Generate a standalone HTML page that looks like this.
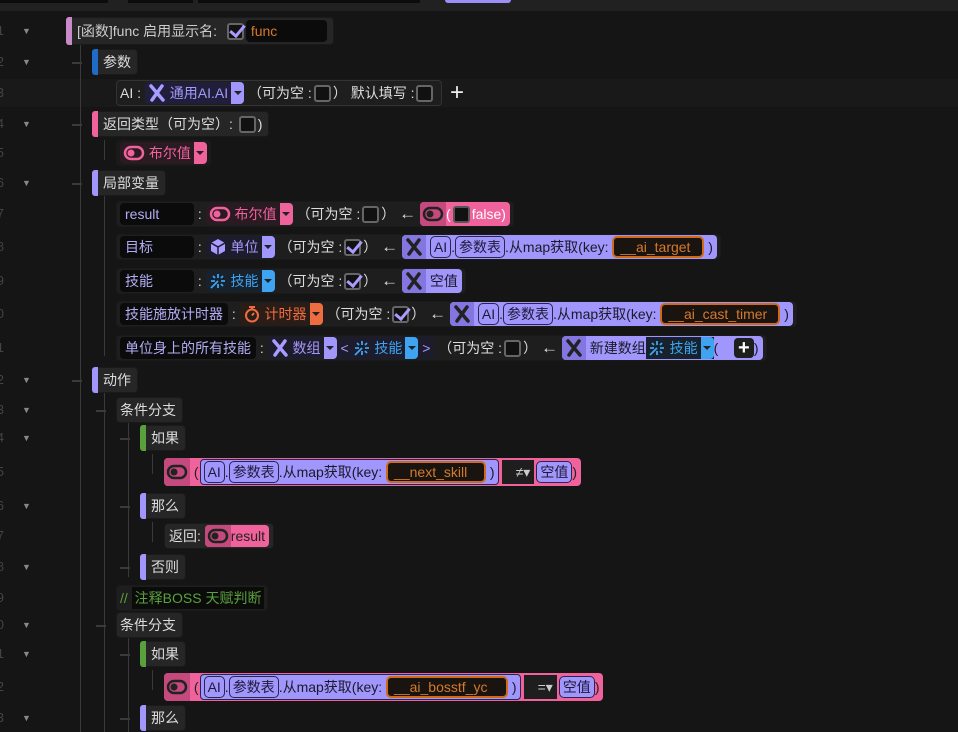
<!DOCTYPE html>
<html><head><meta charset="utf-8">
<style>
*{box-sizing:border-box;margin:0;padding:0}
body{width:958px;height:732px;background:#151515;overflow:hidden;position:relative;font-family:"Liberation Sans","Noto Sans CJK SC",sans-serif;font-size:14px;color:#ddd}
.a{position:absolute}
.row{position:absolute;display:flex;align-items:center;height:26px;white-space:nowrap}
.blk{background:#262626;border-radius:4px;height:26px;display:flex;align-items:center;padding:0 6px 0 4px;position:relative;border:1px solid #1a1a1a}
.bar{width:6px;height:26px;border-radius:3px 0 0 3px;margin:0 5px 0 -5px}
.ln{position:absolute;background:#3a3a3a}
.num{position:absolute;left:-6px;width:10px;text-align:right;color:#444;font-size:13px}
.arr{position:absolute;left:22px;color:#888;font-size:9px}
.inp{background:#0b0b0b;border-radius:4px;height:22px;display:flex;align-items:center;padding:0 5px;color:#b2acf5}
.chk{width:17px;height:17px;border:2px solid #666;background:#111;border-radius:3px;display:inline-block;margin:0 2px;position:relative}
.chk.on::after{content:"";position:absolute;left:4px;top:-3px;width:6px;height:12px;border:solid #a99cff;border-width:0 3px 3px 0;transform:rotate(40deg)}
.type{display:flex;align-items:center;height:22px;border-radius:4px;background:#1b1b1b;padding-left:3px}
.dd{width:13px;height:22px;border-radius:0 4px 4px 0;margin-left:3px;display:flex;align-items:center;justify-content:center}
.dd::after{content:"";border:4px solid transparent;border-top:4px solid #222;margin-top:4px}
.pp{background:#a096fb;color:#1a1a2a}
.pk{background:#f0629b;color:#fff}
.ibox{border:1.5px solid #2a2450;border-radius:5px;padding:0 3px;height:22px;display:flex;align-items:center;color:#1d1a3a;background:#a096fb}
.key{border:2px solid #d06a18;background:#1a1410;color:#d57a2c;border-radius:5px;height:22px;display:flex;align-items:center;padding:0 6px}
.g{color:#ccc}
.la{font-size:17px}
</style></head><body>
<div class="a" style="left:0;top:0;width:958px;height:11px;background:#212121"></div>
<div class="a" style="left:0;top:0;width:108px;height:3px;background:#0c0c0c"></div>
<div class="a" style="left:128px;top:0;width:65px;height:3px;background:#0c0c0c"></div>
<div class="a" style="left:198px;top:0;width:155px;height:3px;background:#0c0c0c"></div>
<div class="a" style="left:285px;top:0;width:135px;height:3px;background:#0c0c0c"></div>
<div class="a" style="left:445px;top:0;width:66px;height:3px;background:#9c90f8;border-radius:0 0 4px 4px"></div>
<div class="a" style="left:0;top:79px;width:958px;height:28px;background:#191919"></div>

<div class="num" style="top:23px">1</div><div class="arr" style="top:26px">▼</div>
<div class="num" style="top:54px">2</div><div class="arr" style="top:57px">▼</div>
<div class="num" style="top:85px">3</div>
<div class="num" style="top:116px">4</div><div class="arr" style="top:119px">▼</div>
<div class="num" style="top:145px">5</div>
<div class="num" style="top:175px">6</div><div class="arr" style="top:178px">▼</div>
<div class="num" style="top:206px">7</div>
<div class="num" style="top:239px">8</div>
<div class="num" style="top:273px">9</div>
<div class="num" style="top:306px">0</div>
<div class="num" style="top:340px">1</div>
<div class="num" style="top:372px">2</div><div class="arr" style="top:375px">▼</div>
<div class="num" style="top:402px">3</div><div class="arr" style="top:405px">▼</div>
<div class="num" style="top:430px">4</div><div class="arr" style="top:433px">▼</div>
<div class="num" style="top:464px">5</div>
<div class="num" style="top:498px">6</div><div class="arr" style="top:501px">▼</div>
<div class="num" style="top:528px">7</div>
<div class="num" style="top:559px">8</div><div class="arr" style="top:562px">▼</div>
<div class="num" style="top:590px">9</div>
<div class="num" style="top:617px">0</div><div class="arr" style="top:620px">▼</div>
<div class="num" style="top:646px">1</div><div class="arr" style="top:649px">▼</div>
<div class="num" style="top:679px">2</div>
<div class="num" style="top:710px">3</div><div class="arr" style="top:713px">▼</div>

<div class="ln" style="left:80px;top:44px;width:1px;height:688px"></div>
<div class="ln" style="left:104px;top:196px;width:1px;height:160px"></div>
<div class="ln" style="left:104px;top:392px;width:1px;height:340px"></div>
<div class="ln" style="left:128px;top:422px;width:1px;height:155px"></div>
<div class="ln" style="left:128px;top:637px;width:1px;height:95px"></div>
<div class="ln" style="left:72px;top:62px;width:10px;height:2px"></div>
<div class="ln" style="left:72px;top:124px;width:10px;height:2px"></div>
<div class="ln" style="left:72px;top:183px;width:10px;height:2px"></div>
<div class="ln" style="left:72px;top:380px;width:10px;height:2px"></div>
<div class="ln" style="left:96px;top:410px;width:10px;height:2px"></div>
<div class="ln" style="left:96px;top:625px;width:10px;height:2px"></div>
<div class="ln" style="left:120px;top:438px;width:10px;height:2px"></div>
<div class="ln" style="left:120px;top:506px;width:10px;height:2px"></div>
<div class="ln" style="left:120px;top:567px;width:10px;height:2px"></div>
<div class="ln" style="left:120px;top:654px;width:10px;height:2px"></div>
<div class="ln" style="left:120px;top:718px;width:10px;height:2px"></div>
<div class="ln" style="left:104px;top:140px;width:1px;height:20px"></div>
<div class="ln" style="left:152px;top:454px;width:1px;height:20px"></div>
<div class="ln" style="left:152px;top:522px;width:1px;height:20px"></div>
<div class="ln" style="left:152px;top:670px;width:1px;height:20px"></div>

<div class="row" style="left:66px;top:18px"><div class="blk" style="height:28px;padding-right:6px"><div class="bar" style="background:#c98ac9;height:28px"></div><span class="g">[函数]func 启用显示名:&nbsp;&nbsp;</span><span class="chk on"></span><span class="inp" style="width:81px;color:#d9772c">func</span></div></div>
<div class="row" style="left:92px;top:49px"><div class="blk"><div class="bar" style="background:#1f6cc6"></div>参数</div></div>
<div class="row" style="left:116px;top:80px"><div class="blk" style="background:#1e1e1e;border-color:#333;padding-left:3px">AI :&nbsp;<span class="type" style="background:#201e3a;color:#a39af8"><svg width="18" height="18" viewBox="0 0 18 18"><path d="M3 2 L15 16 M14 2 L4 16" stroke="#a79cff" stroke-width="3.5" stroke-linecap="round"/></svg>&nbsp;通用AI.AI<span class="dd" style="background:#a096fb"></span></span>&nbsp;（可为空 :<span class="chk"></span>）&nbsp;默认填写 :<span class="chk"></span></div></div>
<div class="a" style="left:450px;top:80px;font-size:24px;color:#eee;line-height:26px">+</div>
<div class="row" style="left:92px;top:111px"><div class="blk"><div class="bar" style="background:#f0629b"></div>返回类型（可为空）:&nbsp;<span class="chk"></span>)</div></div>
<div class="row" style="left:116px;top:140px"><div class="blk" style="background:#1a1a1a;padding:0 3px"><span class="type" style="background:#2a1a22;color:#f0629b"><svg width="22" height="16" viewBox="0 0 22 16"><rect x="2" y="2" width="18" height="12" rx="6" fill="none" stroke="#f0629b" stroke-width="2.5"/><circle cx="8" cy="8" r="3.5" fill="#f0629b"/></svg>&nbsp;布尔值<span class="dd" style="background:#f0629b"></span></span></div></div>
<div class="row" style="left:92px;top:170px"><div class="blk"><div class="bar" style="background:#a096fb"></div>局部变量</div></div>

<div class="row" style="left:116px;top:201px"><div class="blk" style="background:#1e1e1e;padding:0 3px"><span class="inp" style="width:74px">result</span>&nbsp;:&nbsp;<span class="type" style="background:#2a1a22;color:#f0629b"><svg width="22" height="16" viewBox="0 0 22 16"><rect x="2" y="2" width="18" height="12" rx="6" fill="none" stroke="#f0629b" stroke-width="2.5"/><circle cx="8" cy="8" r="3.5" fill="#f0629b"/></svg>&nbsp;布尔值<span class="dd" style="background:#f0629b"></span></span>&nbsp;（可为空 :<span class="chk"></span>）&nbsp;<span class="la">←</span>&nbsp;<span class="type pk" style="height:24px;padding:0 4px 0 0"><span style="background:#c44a7d;height:24px;display:flex;align-items:center;padding:0 2px;border-radius:4px 0 0 4px"><svg width="22" height="16" viewBox="0 0 22 16"><rect x="2" y="2" width="18" height="12" rx="6" fill="none" stroke="#222" stroke-width="2.5"/><circle cx="8" cy="8" r="3.5" fill="#222"/></svg></span>(<span class="chk" style="background:#111;border-color:#555"></span>false)</span></div></div>
<div class="row" style="left:116px;top:234px"><div class="blk" style="background:#1e1e1e;padding:0 3px"><span class="inp" style="width:74px">目标</span>&nbsp;:&nbsp;<span class="type" style="background:#1d1c2c;color:#a39af8"><svg width="18" height="18" viewBox="0 0 18 18"><path d="M9 1 L16 5 L16 13 L9 17 L2 13 L2 5Z" fill="#a79cff"/><path d="M2 5 L9 9 L16 5 M9 9 V17" stroke="#1d1c2c" stroke-width="1.5" fill="none"/></svg>&nbsp;单位<span class="dd" style="background:#a096fb"></span></span>&nbsp;（可为空 :<span class="chk on"></span>）&nbsp;<span class="la">←</span>&nbsp;<span class="type pp" style="height:24px;padding:0 4px 0 0"><span style="background:#8376e0;height:24px;display:flex;align-items:center;padding:0 3px;border-radius:4px 0 0 4px"><svg width="18" height="18" viewBox="0 0 18 18"><path d="M3 2 L15 16 M14 2 L4 16" stroke="#222" stroke-width="3.5" stroke-linecap="round"/></svg></span>&nbsp;<span class="ibox">AI</span>.<span class="ibox">参数表</span>.从map获取(key:&nbsp;<span class="key" style="width:92px">__ai_target</span>&nbsp;)</span></div></div>
<div class="row" style="left:116px;top:268px"><div class="blk" style="background:#1e1e1e;padding:0 3px"><span class="inp" style="width:74px">技能</span>&nbsp;:&nbsp;<span class="type" style="background:#17222c;color:#3ea4f2"><svg width="18" height="18" viewBox="0 0 18 18"><path d="M2 16 L9 9 M9 2 V6 M9 12 V16 M2 9 H6 M12 9 H16 M4 4 L6 6 M12 12 L14 14 M14 4 L12 6" stroke="#3ea4f2" stroke-width="1.8"/></svg>&nbsp;技能<span class="dd" style="background:#3ea4f2"></span></span>&nbsp;（可为空 :<span class="chk on"></span>）&nbsp;<span class="la">←</span>&nbsp;<span class="type pp" style="height:24px;padding:0 4px 0 0"><span style="background:#8376e0;height:24px;display:flex;align-items:center;padding:0 3px;border-radius:4px 0 0 4px"><svg width="18" height="18" viewBox="0 0 18 18"><path d="M3 2 L15 16 M14 2 L4 16" stroke="#222" stroke-width="3.5" stroke-linecap="round"/></svg></span>&nbsp;空值</span></div></div>
<div class="row" style="left:116px;top:301px"><div class="blk" style="background:#1e1e1e;padding:0 3px"><span class="inp">技能施放计时器</span>&nbsp;:&nbsp;<span class="type" style="background:#2a1c16;color:#ee6d40"><svg width="18" height="18" viewBox="0 0 18 18"><circle cx="9" cy="10.5" r="6" fill="none" stroke="#ee6d40" stroke-width="2"/><path d="M6 2 H12 M9 2 V4.5 M9 10.5 L11 8" stroke="#ee6d40" stroke-width="2"/></svg>&nbsp;计时器<span class="dd" style="background:#ee6d40"></span></span>&nbsp;（可为空 :<span class="chk on"></span>）&nbsp;<span class="la">←</span>&nbsp;<span class="type pp" style="height:24px;padding:0 4px 0 0"><span style="background:#8376e0;height:24px;display:flex;align-items:center;padding:0 3px;border-radius:4px 0 0 4px"><svg width="18" height="18" viewBox="0 0 18 18"><path d="M3 2 L15 16 M14 2 L4 16" stroke="#222" stroke-width="3.5" stroke-linecap="round"/></svg></span>&nbsp;<span class="ibox">AI</span>.<span class="ibox">参数表</span>.从map获取(key:&nbsp;<span class="key" style="width:120px">__ai_cast_timer</span>&nbsp;)</span></div></div>
<div class="row" style="left:116px;top:335px"><div class="blk" style="background:#1e1e1e;padding:0 3px"><span class="inp">单位身上的所有技能</span>&nbsp;:&nbsp;<span class="type" style="background:#1d1c2c;color:#a39af8"><svg width="18" height="18" viewBox="0 0 18 18"><path d="M3 2 L15 16 M14 2 L4 16" stroke="#a79cff" stroke-width="3.5" stroke-linecap="round"/></svg>&nbsp;数组<span class="dd" style="background:#a096fb"></span>&nbsp;&lt;&nbsp;<svg width="18" height="18" viewBox="0 0 18 18"><path d="M2 16 L9 9 M9 2 V6 M9 12 V16 M2 9 H6 M12 9 H16 M4 4 L6 6 M12 12 L14 14 M14 4 L12 6" stroke="#3ea4f2" stroke-width="1.8"/></svg>&nbsp;<span style="color:#3ea4f2">技能</span><span class="dd" style="background:#3ea4f2"></span>&nbsp;&gt;&nbsp;</span>&nbsp;（可为空 :<span class="chk"></span>）&nbsp;<span class="la">←</span>&nbsp;<span class="type pp" style="height:24px;padding:0 4px 0 0"><span style="background:#8376e0;height:24px;display:flex;align-items:center;padding:0 3px;border-radius:4px 0 0 4px"><svg width="18" height="18" viewBox="0 0 18 18"><path d="M3 2 L15 16 M14 2 L4 16" stroke="#222" stroke-width="3.5" stroke-linecap="round"/></svg></span>&nbsp;新建数组<span style="background:#17222c;display:flex;align-items:center;height:22px;padding-left:2px;color:#3ea4f2"><svg width="18" height="18" viewBox="0 0 18 18"><path d="M2 16 L9 9 M9 2 V6 M9 12 V16 M2 9 H6 M12 9 H16 M4 4 L6 6 M12 12 L14 14 M14 4 L12 6" stroke="#3ea4f2" stroke-width="1.8"/></svg>&nbsp;技能<span class="dd" style="background:#3ea4f2"></span></span>(&nbsp;&nbsp;&nbsp;&nbsp;<span style="background:#1e1e1e;color:#fff;border-radius:4px;width:20px;height:20px;display:flex;align-items:center;justify-content:center;font-size:20px;font-weight:bold">+</span>)</span></div></div>

<div class="row" style="left:92px;top:367px"><div class="blk"><div class="bar" style="background:#a096fb"></div>动作</div></div>
<div class="row" style="left:116px;top:397px"><div class="blk" style="padding-left:3px">条件分支</div></div>
<div class="row" style="left:140px;top:425px"><div class="blk"><div class="bar" style="background:#5aa03c"></div>如果</div></div>
<div class="row" style="left:164px;top:459px"><span class="type pk" style="height:28px;padding:0 4px 0 0;color:#222"><span style="background:#c44a7d;height:28px;display:flex;align-items:center;padding:0 2px;border-radius:4px 0 0 4px"><svg width="22" height="16" viewBox="0 0 22 16"><rect x="2" y="2" width="18" height="12" rx="6" fill="none" stroke="#222" stroke-width="2.5"/><circle cx="8" cy="8" r="3.5" fill="#222"/></svg></span>&nbsp;(<span class="type pp" style="height:26px;border:1.5px solid #2a2450;padding:0 3px;margin:0 1px"><span class="ibox">AI</span>.<span class="ibox">参数表</span>.从map获取(key:&nbsp;<span class="key" style="width:100px">__next_skill</span>&nbsp;)</span><span style="background:#1e1e1e;color:#ccc;height:24px;display:flex;align-items:center;padding:0 4px 0 14px;margin:0 2px">≠▾</span><span class="ibox">空值</span>)</span></div>
<div class="row" style="left:140px;top:493px"><div class="blk"><div class="bar" style="background:#a096fb"></div>那么</div></div>
<div class="row" style="left:164px;top:523px"><div class="blk" style="padding:0 4px">返回:&nbsp;<span class="type pk" style="height:22px;padding:0 4px 0 0;color:#222"><span style="background:#c44a7d;height:22px;display:flex;align-items:center;padding:0 2px;border-radius:4px 0 0 4px"><svg width="22" height="16" viewBox="0 0 22 16"><rect x="2" y="2" width="18" height="12" rx="6" fill="none" stroke="#222" stroke-width="2.5"/><circle cx="8" cy="8" r="3.5" fill="#222"/></svg></span>result</span></div></div>
<div class="row" style="left:140px;top:554px"><div class="blk"><div class="bar" style="background:#a096fb"></div>否则</div></div>
<div class="row" style="left:116px;top:585px"><div class="blk" style="padding:0 3px;background:#1e1e1e;color:#5aa03c">//&nbsp;<span style="background:#0b0b0b;height:22px;display:flex;align-items:center;padding:0 3px">注释BOSS 天赋判断</span></div></div>
<div class="row" style="left:116px;top:612px"><div class="blk" style="padding-left:3px">条件分支</div></div>
<div class="row" style="left:140px;top:641px"><div class="blk"><div class="bar" style="background:#5aa03c"></div>如果</div></div>
<div class="row" style="left:164px;top:674px"><span class="type pk" style="height:28px;padding:0 4px 0 0;color:#222"><span style="background:#c44a7d;height:28px;display:flex;align-items:center;padding:0 2px;border-radius:4px 0 0 4px"><svg width="22" height="16" viewBox="0 0 22 16"><rect x="2" y="2" width="18" height="12" rx="6" fill="none" stroke="#222" stroke-width="2.5"/><circle cx="8" cy="8" r="3.5" fill="#222"/></svg></span>&nbsp;(<span class="type pp" style="height:26px;border:1.5px solid #2a2450;padding:0 3px;margin:0 1px"><span class="ibox">AI</span>.<span class="ibox">参数表</span>.从map获取(key:&nbsp;<span class="key" style="width:122px">__ai_bosstf_yc</span>&nbsp;)</span><span style="background:#1e1e1e;color:#ccc;height:24px;display:flex;align-items:center;padding:0 4px 0 14px;margin:0 2px">=▾</span><span class="ibox">空值</span>)</span></div>
<div class="row" style="left:140px;top:705px"><div class="blk"><div class="bar" style="background:#a096fb"></div>那么</div></div>
</body></html>
